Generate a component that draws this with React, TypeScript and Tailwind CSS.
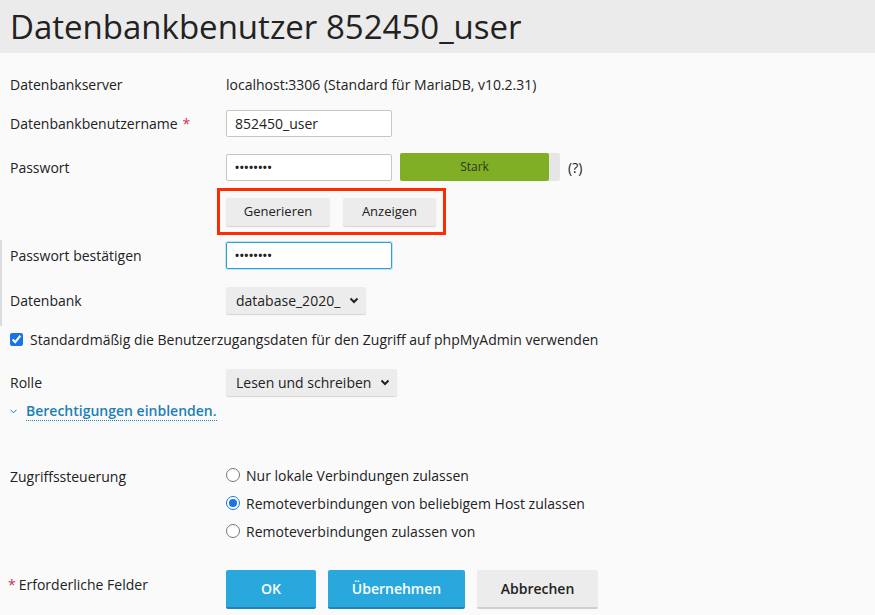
import { useState } from "react";

function Label({ children, required }: { children: React.ReactNode; required?: boolean }) {
  return (
    <div className="w-[226px] shrink-0 pl-[10px]">
      {children}
      {required && <span className="ml-[5px] text-[#d0334d]">*</span>}
    </div>
  );
}

function Select({ value, width }: { value: string; width: string }) {
  return (
    <div className={`flex h-[27px] items-center justify-between rounded-[2px] bg-[#ececec] pl-[10px] pr-[7px] shadow-[0_1px_1px_rgba(0,0,0,0.15)] ${width}`}>
      <span>{value}</span>
      <svg width="10" height="7" viewBox="0 0 10 7">
        <path d="M1.5 1.5 L5 5 L8.5 1.5" fill="none" stroke="#222" strokeWidth="2" />
      </svg>
    </div>
  );
}

function Radio({ checked, label }: { checked?: boolean; label: string }) {
  return (
    <div className="flex h-[28px] items-center gap-[6px]">
      {checked ? (
        <span className="flex h-[14px] w-[14px] items-center justify-center rounded-full border-[1.5px] border-[#1a73e8] bg-white">
          <span className="h-[8px] w-[8px] rounded-full bg-[#1a73e8]" />
        </span>
      ) : (
        <span className="h-[14px] w-[14px] rounded-full border border-[#767676] bg-white" />
      )}
      <span>{label}</span>
    </div>
  );
}

export default function App() {
  const [checked, setChecked] = useState(true);

  return (
    <div className="h-[615px] w-[875px] overflow-hidden bg-[#fafafa] text-[14px] text-[#222] [font-family:'Open_Sans','Noto_Sans',sans-serif]">
      {/* Header */}
      <div className="flex h-[53px] items-center bg-[#ebebeb] pl-[10px]">
        <h1 className="text-[33px] leading-none text-[#222]">Datenbankbenutzer 852450_user</h1>
      </div>

      <div className="relative pt-[19px]">
        {/* left edge marker */}
        <div className="absolute left-0 top-[187px] h-[86px] w-[2px] bg-[#dcdcdc]" />

        {/* Server */}
        <div className="flex h-[24px] items-center">
          <Label>Datenbankserver</Label>
          <span>localhost:3306 (Standard für MariaDB, v10.2.31)</span>
        </div>

        {/* Username */}
        <div className="mt-[14px] flex items-center">
          <Label required>Datenbankbenutzername</Label>
          <div className="flex h-[27px] w-[166px] items-center rounded-[2px] border border-[#c6c6c6] bg-white pl-[8px]">
            852450_user
          </div>
        </div>

        {/* Password */}
        <div className="mt-[16px] flex items-center">
          <Label>Passwort</Label>
          <div className="flex h-[27px] w-[166px] items-center rounded-[2px] border border-[#c6c6c6] bg-white pl-[8px] text-[11px] font-bold tracking-[0.5px]">
            ••••••••
          </div>
          <div className="ml-[8px] flex h-[28px] w-[160px] rounded-[2px] bg-[#e6e6e6]">
            <div className="flex w-[149px] items-center justify-center rounded-[2px] bg-[#80ae25] text-[12px] text-[#2c3a12]">
              Stark
            </div>
          </div>
          <span className="ml-[8px]">(?)</span>
        </div>

        {/* Generate / show */}
        <div className="mt-[7px] flex">
          <div className="ml-[217px] flex h-[47px] w-[229px] items-center gap-[13px] border-[3px] border-[#ff2a00] pl-[6px]">
            <button className="h-[28px] w-[104px] rounded-[2px] bg-[#ececec] text-[13px] shadow-[0_1px_1px_rgba(0,0,0,0.15)]">
              Generieren
            </button>
            <button className="h-[28px] w-[93px] rounded-[2px] bg-[#ececec] text-[13px] shadow-[0_1px_1px_rgba(0,0,0,0.15)]">
              Anzeigen
            </button>
          </div>
        </div>

        {/* Confirm */}
        <div className="mt-[7px] flex items-center">
          <Label>Passwort bestätigen</Label>
          <div className="flex h-[27px] w-[166px] items-center rounded-[2px] border border-[#28a0d8] bg-white pl-[8px] text-[11px] font-bold tracking-[0.5px] shadow-[0_0_0_1px_rgba(40,160,216,0.25)]">
            ••••••••
          </div>
        </div>

        {/* Database */}
        <div className="mt-[18px] flex items-center">
          <Label>Datenbank</Label>
          <Select value="database_2020_" width="w-[140px]" />
        </div>

        {/* checkbox */}
        <label className="mt-[12px] flex h-[26px] items-center gap-[7px] pl-[10px]">
          <input
            type="checkbox"
            checked={checked}
            onChange={() => setChecked(!checked)}
            className="h-[13px] w-[13px] accent-[#1a73e8]"
          />
          <span>Standardmäßig die Benutzerzugangsdaten für den Zugriff auf phpMyAdmin verwenden</span>
        </label>

        {/* Role */}
        <div className="mt-[17px] flex items-center">
          <Label>Rolle</Label>
          <Select value="Lesen und schreiben" width="w-[171px]" />
        </div>

        {/* Permissions link */}
        <div className="mt-[4px] flex h-[22px] items-center pl-[10px]">
          <svg width="7" height="5" viewBox="0 0 7 5" className="mr-[9px]">
            <path d="M0.5 0.8 L3.5 3.8 L6.5 0.8" fill="none" stroke="#1a80b6" strokeWidth="1" />
          </svg>
          <span className="border-b border-dotted border-[#1a80b6] font-semibold leading-[18px] text-[#1a80b6]">
            Berechtigungen einblenden.
          </span>
        </div>

        {/* Access */}
        <div className="mt-[41px] flex">
          <div className="w-[226px] shrink-0 pl-[10px] leading-[28px]">Zugriffssteuerung</div>
          <div className="-mt-[2px] flex flex-col">
            <Radio label="Nur lokale Verbindungen zulassen" />
            <Radio checked label="Remoteverbindungen von beliebigem Host zulassen" />
            <Radio label="Remoteverbindungen zulassen von" />
          </div>
        </div>

        {/* Footer */}
        <div className="mt-[25px] flex items-start">
          <div className="w-[226px] shrink-0 pl-[8px] pt-[4px]">
            <span className="mr-[3px] text-[#d0334d]">*</span>Erforderliche Felder
          </div>
          <div className="flex gap-[12px]">
            <button className="h-[39px] w-[90px] rounded-[2px] border-b-[2px] border-[#1d86b3] bg-[#29a8de] text-[14px] font-semibold text-white">
              OK
            </button>
            <button className="h-[39px] w-[137px] rounded-[2px] border-b-[2px] border-[#1d86b3] bg-[#29a8de] text-[14px] font-semibold text-white">
              Übernehmen
            </button>
            <button className="h-[39px] w-[121px] rounded-[2px] border-b-[2px] border-[#cfcfcf] bg-[#ececec] text-[14px] font-semibold text-[#222]">
              Abbrechen
            </button>
          </div>
        </div>
      </div>
    </div>
  );
}
